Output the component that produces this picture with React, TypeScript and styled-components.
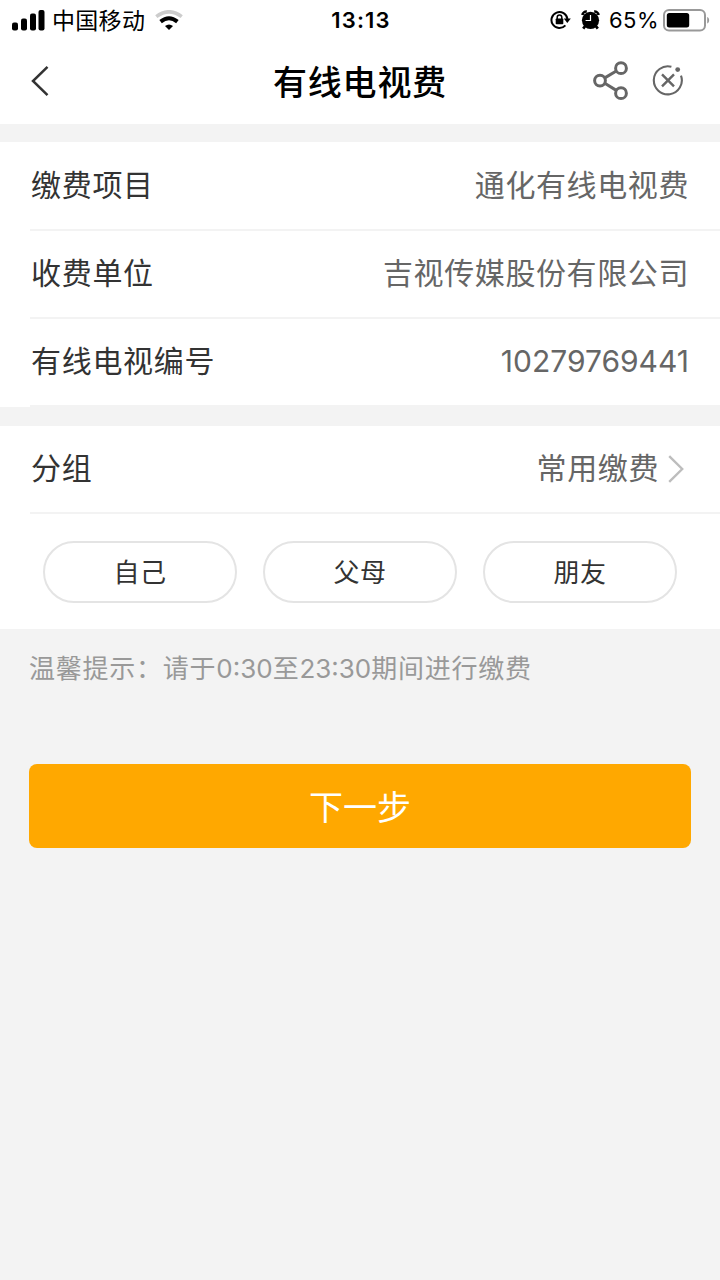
import React from "react";
import styled, { createGlobalStyle } from "styled-components";

const GlobalStyle = createGlobalStyle`
  * { box-sizing: border-box; }
  body {
    margin: 0;
    background: #f3f3f3;
    font-family: "Inter", "Noto Sans CJK SC", sans-serif;
    color: #333;
  }
  button { font-family: inherit; margin: 0; padding: 0; cursor: pointer; }
`;

const Page = styled.div`
  min-height: 1280px;
  display: flex;
  flex-direction: column;
`;

const StatusBar = styled.div`
  height: 40px;
  display: grid;
  grid-template-columns: 1fr auto 1fr;
  align-items: center;
  padding: 0 10px 0 12px;
  background: #fff;
  color: #000;
`;

const StatusGroup = styled.div<{ $end?: boolean }>`
  display: flex;
  align-items: center;
  justify-content: ${(p) => (p.$end ? "flex-end" : "flex-start")};
`;

const Carrier = styled.span`
  margin: 0 10px 0 7px;
  padding-top: 2px;
  font-size: 23px;
  line-height: 38px;
  letter-spacing: 0.3px;
`;

const Clock = styled.span`
  font-size: 22px;
  font-weight: 600;
  line-height: 40px;
  letter-spacing: 1.2px;
`;

const Percent = styled.span`
  margin: 0 4px 0 9px;
  font-size: 22px;
  line-height: 40px;
  letter-spacing: 0.5px;
`;

const StatusIcons = styled.div`
  display: flex;
  align-items: center;
  gap: 10px;
`;

const NavBar = styled.header`
  height: 84px;
  display: grid;
  grid-template-columns: 1fr auto 1fr;
  align-items: center;
  padding: 0 36px 2px 30px;
  background: #fff;
`;

const Title = styled.h1`
  margin: 0;
  padding: 3px 0 0 6px;
  font-size: 34px;
  font-weight: 500;
  line-height: 50px;
  letter-spacing: 0.8px;
  color: #000;
`;

const NavActions = styled.div`
  display: flex;
  justify-content: flex-end;
  align-items: center;
  gap: 23px;
`;

const IconButton = styled.button`
  display: flex;
  border: 0;
  background: none;
  justify-self: start;
`;

const Card = styled.section<{ $gap: number }>`
  margin-top: ${(p) => p.$gap}px;
  background: #fff;
`;

const Row = styled.div<{ $height?: number }>`
  height: ${(p) => p.$height ?? 88}px;
  margin-left: 30px;
  padding: 0 31px 2px 1px;
  display: flex;
  align-items: center;
  justify-content: space-between;
  border-bottom: 2px solid #f3f3f3;
  font-size: 30px;
  line-height: 44px;
  letter-spacing: 0.7px;
`;

const Value = styled.span<{ $numeric?: boolean }>`
  display: flex;
  align-items: center;
  color: #666;
  letter-spacing: ${(p) => (p.$numeric ? 0 : 0.6)}px;
`;

const Pills = styled.div`
  display: grid;
  grid-template-columns: repeat(3, 194px);
  gap: 26px;
  padding: 27px 43px 26px;
`;

const Pill = styled.button`
  height: 62px;
  padding-top: 2px;
  border: 2px solid #e4e4e4;
  border-radius: 31px;
  background: #fff;
  color: #333;
  font-size: 26px;
  line-height: 38px;
  letter-spacing: 0.4px;
`;

const Tip = styled.p`
  margin: 20px 29px 0;
  font-size: 26px;
  line-height: 40px;
  letter-spacing: 0.75px;
  color: #999;
`;

const Time = styled.span`
  letter-spacing: 0;
`;

const NextButton = styled.button`
  height: 84px;
  margin: 75px 29px 0;
  padding-top: 3px;
  border: 0;
  border-radius: 8px;
  background: #ffa800;
  color: #fff;
  font-size: 34px;
  line-height: 50px;
`;

const SignalIcon = () => (
  <svg width="33" height="21" viewBox="0 0 33 21">
    <rect x="0" y="12.5" width="6" height="8" rx="2" />
    <rect x="9" y="8.5" width="6" height="12" rx="2" />
    <rect x="18" y="3.5" width="6" height="17" rx="2" />
    <rect x="26.5" y="0" width="6" height="20.5" rx="2" />
  </svg>
);

const WifiIcon = () => (
  <svg width="28" height="21" viewBox="0 0 28 21" fill="none">
    <path d="M1.3 6.6Q14-3 26.7 6.6" stroke="#ccc" strokeWidth="3.6" />
    <path d="M5.6 11.6Q14 4.9 22.4 11.6" stroke="#000" strokeWidth="4" />
    <path d="M10 16Q14 12.8 18 16L14 20Z" fill="#000" />
  </svg>
);

const RotationLockIcon = () => (
  <svg width="21" height="20" viewBox="0 0 21 20" fill="none">
    <path d="M15.4 15.4A8 8 0 1 1 17.4 9" stroke="#000" strokeWidth="2" />
    <path d="M13.8 8.5H20.8L17.3 13Z" fill="#000" />
    <rect x="5.7" y="8.5" width="7.6" height="5.8" rx="0.8" fill="#000" />
    <path d="M7.2 9V7.3a2.3 2.3 0 0 1 4.6 0V9" stroke="#000" strokeWidth="1.5" />
  </svg>
);

const AlarmIcon = () => (
  <svg width="19" height="20" viewBox="0 0 19 20" fill="none">
    <circle cx="9.5" cy="10.3" r="8.6" fill="#000" />
    <path d="M1.4 5A4 4 0 0 1 5.8 1.6M13.2 1.6A4 4 0 0 1 17.6 5" stroke="#000" strokeWidth="2.6" />
    <path d="M4.6 15.5L2.2 18.6M14.4 15.5L16.8 18.6" stroke="#000" strokeWidth="2.8" />
    <path d="M9.5 5V10.5H4.6" stroke="#fff" strokeWidth="1.2" />
  </svg>
);

const BatteryIcon = () => (
  <svg width="47" height="23" viewBox="0 0 47 23" fill="none">
    <rect x="1" y="1" width="41" height="20.5" rx="5" stroke="#999" strokeWidth="2" />
    <rect x="3.8" y="4" width="22.4" height="14.5" rx="2.5" fill="#000" />
    <path d="M44.2 8C46.8 9 46.8 13.5 44.2 14.5Z" fill="#999" />
  </svg>
);

const BackIcon = () => (
  <svg width="20" height="32" viewBox="0 0 20 32" fill="none">
    <path d="M17.5 1.8L3 16L17.5 30.2" stroke="#333" strokeWidth="2.5" />
  </svg>
);

const ShareIcon = () => (
  <svg width="36" height="40" viewBox="0 0 36 40" fill="none" stroke="#666" strokeWidth="3">
    <circle cx="7" cy="19.6" r="5.4" />
    <circle cx="28" cy="7.2" r="5.4" />
    <circle cx="28" cy="32.2" r="5.4" />
    <path d="M11.8 16.9L23.3 10M11.8 22.3L23.3 29.4" />
  </svg>
);

const CloseIcon = () => (
  <svg width="32" height="32" viewBox="0 0 32 32" fill="none">
    <path d="M19.4 1.8A14 14 0 1 0 29 10.6" stroke="#666" strokeWidth="2.1" />
    <path d="M10 9.3L22 21.3M22 9.3L10 21.3" stroke="#666" strokeWidth="2.4" />
    <circle cx="25.7" cy="4.6" r="2.4" fill="#666" />
  </svg>
);

const ChevronIcon = styled(({ className }: { className?: string }) => (
  <svg className={className} width="17" height="28" viewBox="0 0 17 28" fill="none">
    <path d="M1.2 1.2L14.2 14L1.2 26.8" stroke="#bdbdbd" strokeWidth="2.4" />
  </svg>
))`
  margin: 1px 4px 0 9px;
`;

const details = [
  { label: "缴费项目", value: "通化有线电视费", height: 89 },
  { label: "收费单位", value: "吉视传媒股份有限公司" },
  { label: "有线电视编号", value: "10279769441", numeric: true },
];

export default function App() {
  return (
    <Page>
      <GlobalStyle />
      <StatusBar>
        <StatusGroup>
          <SignalIcon />
          <Carrier>中国移动</Carrier>
          <WifiIcon />
        </StatusGroup>
        <Clock>13:13</Clock>
        <StatusGroup $end>
          <StatusIcons>
            <RotationLockIcon />
            <AlarmIcon />
          </StatusIcons>
          <Percent>65%</Percent>
          <BatteryIcon />
        </StatusGroup>
      </StatusBar>
      <NavBar>
        <IconButton aria-label="返回">
          <BackIcon />
        </IconButton>
        <Title>有线电视费</Title>
        <NavActions>
          <IconButton aria-label="分享">
            <ShareIcon />
          </IconButton>
          <IconButton aria-label="关闭">
            <CloseIcon />
          </IconButton>
        </NavActions>
      </NavBar>
      <Card $gap={18}>
        {details.map((d) => (
          <Row key={d.label} $height={d.height}>
            <span>{d.label}</span>
            <Value $numeric={d.numeric}>{d.value}</Value>
          </Row>
        ))}
      </Card>
      <Card $gap={19}>
        <Row>
          <span>分组</span>
          <Value>
            常用缴费
            <ChevronIcon />
          </Value>
        </Row>
        <Pills>
          {["自己", "父母", "朋友"].map((name) => (
            <Pill key={name}>{name}</Pill>
          ))}
        </Pills>
      </Card>
      <Tip>
        温馨提示：请于<Time>0:30</Time>至<Time>23:30</Time>期间进行缴费
      </Tip>
      <NextButton>下一步</NextButton>
    </Page>
  );
}
